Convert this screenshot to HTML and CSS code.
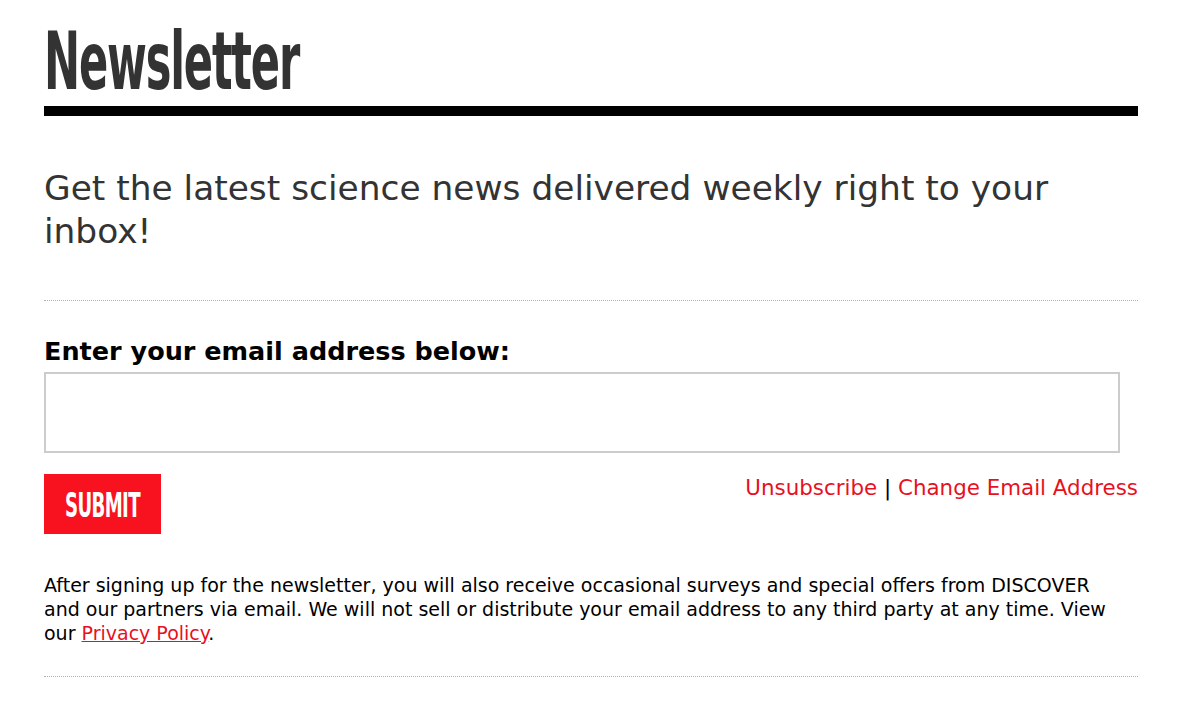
FILE: index.html
```html
<!DOCTYPE html>
<html>
<head>
<meta charset="utf-8">
<link rel="stylesheet" href="styles.css">
</head>
<body>
<div class="page">
  <h1 class="title"><span class="title-text">Newsletter</span></h1>
  <p class="lead">Get the latest science news delivered weekly right to your inbox!</p>
  <div class="dotted"></div>
  <form class="form">
    <label class="label" for="email">Enter your email address below:</label>
    <input class="input" id="email" type="text">
    <div class="actions">
      <button class="submit" type="button"><span class="submit-text">SUBMIT</span></button>
      <div class="links"><a href="#">Unsubscribe</a> | <a href="#">Change Email Address</a></div>
    </div>
  </form>
  <p class="fine">After signing up for the newsletter, you will also receive occasional surveys and special offers from DISCOVER and our partners via email. We will not sell or distribute your email address to any third party at any time. View our <a class="u" href="#">Privacy Policy</a>.</p>
  <div class="dotted"></div>
</div>
</body>
</html>
```
FILE: styles.css
```css
* { box-sizing: border-box; }
body { margin: 0; background: #fff; font-family: "DejaVu Sans", Verdana, sans-serif; color: #000; }
.page { padding: 0 62px 0 44px; }
.title {
  margin: 0;
  padding-top: 20px;
  font-family: "DejaVu Sans Condensed", "DejaVu Sans", sans-serif;
  font-weight: bold;
  font-size: 80px;
  line-height: 84px;
  color: #333;
  border-bottom: 10px solid #000;
  padding-bottom: 2px;
  white-space: nowrap;
}
.title-text {
  display: inline-block;
  letter-spacing: -2px;
  transform: scaleX(0.6);
  transform-origin: left center;
}
.lead {
  margin: 0;
  padding: 51px 0 47px;
  font-size: 34.4px;
  line-height: 43px;
  color: #333;
}
.dotted { border-top: 1px dotted #b0b0b0; }
.form { padding-top: 33px; }
.label { display: block; font-weight: bold; font-size: 25.5px; line-height: 34px; margin-bottom: 4px; }
.input { display: block; width: 1076px; height: 81px; border: 2px solid #ccc; margin: 0; }
.actions { display: flex; justify-content: space-between; align-items: flex-start; margin-top: 21px; }
.submit {
  width: 117px; height: 60px; border: 0; background: #f8121f; color: #fff;
  font-family: "DejaVu Sans Condensed", "DejaVu Sans", sans-serif;
  font-weight: bold; font-size: 33px; padding: 3px 0 0; line-height: 1;
  display: flex; justify-content: center; align-items: center;
}
.submit-text { display: inline-block; transform: scaleX(0.61); letter-spacing: -1px; }
.links { font-size: 21.4px; line-height: 28px; padding-top: 0; }
.links a { color: #e8101e; text-decoration: none; }
.fine { margin: 39px 0 31px; padding-right: 20px; font-size: 19px; line-height: 24px; }
.fine .u { color: #e8101e; text-decoration: underline; }
```
